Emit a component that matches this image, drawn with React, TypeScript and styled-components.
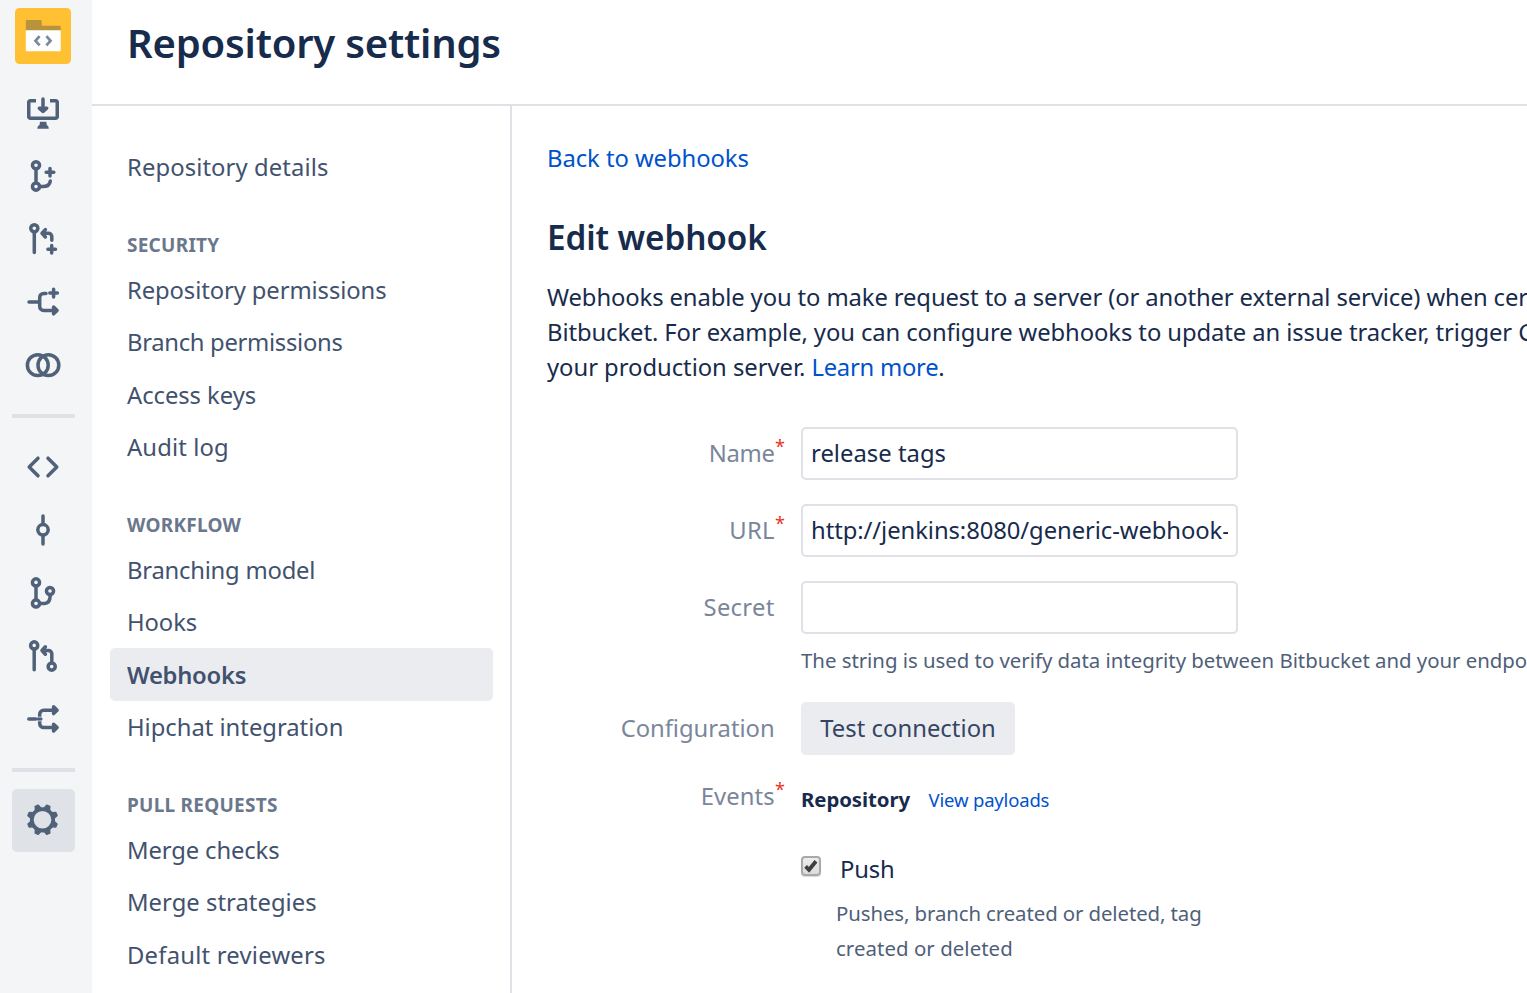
import React from "react";
import styled, { createGlobalStyle } from "styled-components";

const GlobalStyle = createGlobalStyle`
  *, *::before, *::after { box-sizing: border-box; }
  body { margin: 0; overflow: hidden; background: #fff; }
  body, input, button { font-family: "Noto Sans", "Open Sans", sans-serif; }
`;

const ink = "#172b4d";
const line = "#dfe1e6";
const iconColor = "#50617a";

const Page = styled.div`
  display: flex;
  width: 100vw;
  height: 100vh;
  overflow: hidden;
  color: ${ink};
  font-size: 23.8px;
  line-height: 35px;
`;

const Rail = styled.aside`
  flex: none;
  width: 92px;
  padding: 8px 17px 0 12px;
  background: #f4f5f7;
`;

const Logo = styled.a`
  display: block;
  width: 56px;
  height: 56px;
  margin: 0 0 17.5px 3px;
  svg { display: block; }
`;

const RailItem = styled.a<{ $active?: boolean }>`
  display: flex;
  align-items: center;
  justify-content: center;
  height: 63px;
  padding-right: 1px;
  border-radius: 5px;
  background: ${p => (p.$active ? "#dfe2e7" : "transparent")};
`;

const RailDivider = styled.hr`
  height: 4px;
  margin: 17.5px 0 17.3px;
  border: 0;
  background: ${line};
`;

const Glyph = styled.svg`
  display: block;
  width: 42px;
  height: 42px;
  fill: none;
  stroke: ${iconColor};
  stroke-width: 3.5;
  stroke-linecap: round;
  stroke-linejoin: round;
`;

const Main = styled.main`
  display: flex;
  flex: 1;
  flex-direction: column;
  min-width: 0;
`;

const Header = styled.header`
  flex: none;
  height: 106px;
  padding: 14px 35px 0;
  border-bottom: 2px solid ${line};
`;

const Title = styled.h1`
  margin: 0;
  font-size: 40px;
  font-weight: 600;
  line-height: 57px;
  letter-spacing: -0.2px;
`;

const Body = styled.div`
  display: flex;
  flex: 1;
  min-height: 0;
`;

const Nav = styled.nav`
  flex: none;
  width: 420px;
  padding: 35.25px 17px 0 18px;
  border-right: 2px solid ${line};
  overflow: hidden;
`;

const NavHeading = styled.h3`
  height: 70px;
  margin: 0;
  padding: 39.5px 17px 0;
  color: #6b778c;
  font-size: 19px;
  font-weight: 700;
  line-height: 25px;
  letter-spacing: 0.25px;
`;

const NavLink = styled.a<{ $active?: boolean; $track: number }>`
  display: block;
  height: ${p => (p.$active ? 53.25 : 52.5)}px;
  margin-top: ${p => (p.$active ? -0.75 : 0)}px;
  padding: ${p => (p.$active ? 0.75 : 0)}px 17px 0;
  border-radius: 5px;
  background: ${p => (p.$active ? "#ebecf0" : "transparent")};
  color: #42526e;
  font-weight: ${p => (p.$active ? 600 : 400)};
  line-height: 52.5px;
  letter-spacing: ${p => p.$track}px;
`;

const Content = styled.section`
  flex: 1;
  min-width: 0;
  padding: 35px 0 0 35px;
  overflow: hidden;
  white-space: nowrap;
`;

const Link = styled.a<{ $small?: boolean; $track?: number }>`
  color: #0052cc;
  font-size: ${p => (p.$small ? "18.5px" : "inherit")};
  letter-spacing: ${p => p.$track ?? 0}px;
`;

const Subtitle = styled.h2`
  margin: 37px 0 18px;
  font-size: 33.3px;
  font-weight: 600;
  line-height: 49px;
  letter-spacing: -0.1px;
`;

const Intro = styled.p`
  margin: 0 0 42px;
`;

const Text = styled.span<{ $track: number }>`
  letter-spacing: ${p => p.$track}px;
`;

const Field = styled.div<{ $gap: number }>`
  display: grid;
  grid-template-columns: 254px 1fr;
  margin-bottom: ${p => p.$gap}px;
`;

const Label = styled.label<{ $track: number }>`
  display: flex;
  justify-content: flex-end;
  height: 52.5px;
  color: #7a869a;
  line-height: 52.5px;
  letter-spacing: ${p => p.$track}px;
`;

const Marker = styled.span`
  width: 26.4px;
  padding-left: 0.4px;
  color: #e5341f;
  font-size: 18px;
  line-height: 38px;
`;

const TextInput = styled.input<{ $track?: number }>`
  display: block;
  width: 437px;
  height: 52.5px;
  padding: 0 8px;
  border: 2px solid ${line};
  border-radius: 5px;
  outline: 0;
  background: #fff;
  color: ${ink};
  font-size: 23.8px;
  letter-spacing: ${p => p.$track ?? 0}px;
`;

const Help = styled.div`
  margin-top: 9.5px;
  color: #505f79;
  font-size: 20.4px;
  letter-spacing: -0.025px;
`;

const Button = styled.button`
  width: 214px;
  height: 52.75px;
  padding: 0;
  border: 0;
  border-radius: 5px;
  background: #ebecf0;
  color: #344563;
  font-size: 23.8px;
  letter-spacing: 0.04px;
`;

const GroupHeader = styled.div`
  display: flex;
  gap: 18.5px;
  margin: 12px 0 35px;
`;

const GroupName = styled.strong`
  font-size: 20.4px;
  letter-spacing: -0.08px;
`;

const Option = styled.label`
  display: flex;
  align-items: flex-start;
  gap: 19px;
  height: 35px;
`;

const Box = styled.span`
  display: block;
  width: 20px;
  height: 20px;
  margin-top: 4px;
  border: 2px solid #a9a9a9;
  border-radius: 4px;
  background: linear-gradient(#ededed, #dcdcdc);
  box-shadow: 0 1px 1px rgba(0, 0, 0, 0.15);
  svg { display: block; overflow: visible; }
`;

const OptionHelp = styled.div`
  margin-top: 8.8px;
  padding-left: 35px;
  color: #505f79;
  font-size: 20.4px;
`;

const Plus = ({ x, y }: { x: number; y: number }) => (
  <path d={`M${x - 3.8} ${y}h7.6M${x} ${y - 3.8}v7.6`} />
);

const Ring = ({ x, y }: { x: number; y: number }) => <circle cx={x} cy={y} r="3.55" />;

const CloneIcon = () => (
  <Glyph viewBox="0 0 42 42">
    <path strokeLinecap="butt" d="M14 8.75H8.3A1.5 1.5 0 0 0 6.75 10.3V24.5A1.7 1.7 0 0 0 8.5 26.3H33.5A1.7 1.7 0 0 0 35.25 24.5V10.3A1.5 1.5 0 0 0 33.7 8.75H28" />
    <path d="M21 7V19M17.3 16.2 21 19.4 24.7 16.2z" />
    <path fill={iconColor} stroke="none" d="M18 29.7h6.3l.5 3.3q2 .6 2 3.8H15.3q0-3.2 2.2-3.8z" />
  </Glyph>
);

const CreateBranchIcon = () => (
  <Glyph viewBox="0 0 42 42">
    <Ring x={14} y={10.3} /><Ring x={14} y={31.6} />
    <path d="M14 14v14M18 31.6h2.5c4.5 0 7.4-1.8 7.8-5.6" />
    <Plus x={28} y={17.3} />
  </Glyph>
);

const CreatePullRequestIcon = () => (
  <Glyph viewBox="0 0 42 42">
    <Ring x={12.3} y={10.3} />
    <path d="M12.3 14v20.6M20.3 15.3h6.2a3.3 3.3 0 0 1 3.3 3.3v3.6M23.4 11.6l-3.4 3.7 3.4 3.7" />
    <Plus x={29.7} y={31.3} />
  </Glyph>
);

const CreateForkIcon = () => (
  <Glyph viewBox="0 0 42 42">
    <path d="M7 21h10.5M24 12.4h-2.3a4 4 0 0 0-4 4v9a4 4 0 0 0 4 4h12.8M31.6 26l3.5 3.4-3.5 3.4z" />
    <Plus x={31.6} y={12.1} />
  </Glyph>
);

const CompareIcon = () => (
  <Glyph viewBox="0 0 42 42">
    <circle cx="15.8" cy="21.2" r="10.4" /><circle cx="26.4" cy="21.2" r="10.4" />
  </Glyph>
);

const SourceIcon = () => (
  <Glyph viewBox="0 0 42 42">
    <path d="M16 12.2 7.2 21l8.8 8.8M26 12.2l8.8 8.8-8.8 8.8" />
  </Glyph>
);

const CommitIcon = () => (
  <Glyph viewBox="0 0 42 42">
    <circle cx="21" cy="20.8" r="5.2" />
    <path d="M21 7v8M21 26.6v8.3" />
  </Glyph>
);

const BranchesIcon = () => (
  <Glyph viewBox="0 0 42 42">
    <Ring x={14} y={10.4} /><Ring x={14} y={31.4} /><Ring x={28} y={19} />
    <path d="M14 14v14M18 31.4h4.5c4 0 5.6-2.5 5.7-8" />
  </Glyph>
);

const PullRequestsIcon = () => (
  <Glyph viewBox="0 0 42 42">
    <Ring x={12.2} y={10.4} /><Ring x={29.7} y={31.6} />
    <path d="M12.2 14v20.8M20.3 15.5h6.2a3.3 3.3 0 0 1 3.3 3.3v9M23.4 11.8l-3.4 3.7 3.4 3.7" />
  </Glyph>
);

const ForksIcon = () => (
  <Glyph viewBox="0 0 42 42">
    <path d="M34.5 12.2H21.7a4 4 0 0 0-4 4v9.4a4 4 0 0 0 4 4h12.8M31.6 8.8l3.5 3.4-3.5 3.4zM31.6 26.2l3.5 3.4-3.5 3.4z" />
    <path d="M6.8 21h12" />
    <path stroke="#f4f5f7" strokeWidth="0.7" strokeLinecap="butt" d="M14 19.1h5.8M14 22.9h5.8" />
  </Glyph>
);

const SettingsIcon = () => (
  <Glyph viewBox="0 0 42 42">
    <circle cx="20.5" cy="19.8" r="10.7" strokeWidth="3.8" />
    {[22.5, 67.5, 112.5, 157.5, 202.5, 247.5, 292.5, 337.5].map(a => (
      <path key={a} transform={`rotate(${a} 20.5 19.8)`} fill={iconColor} strokeWidth="1.6" d="M18.9 4.8h3.2l1.3 3.8h-5.8z" />
    ))}
  </Glyph>
);

const LogoMark = () => (
  <svg width="56" height="56" viewBox="0 0 56 56">
    <rect width="56" height="56" rx="4.5" fill="#ffc034" />
    <path fill="#b8933a" d="M10.8 13.2q0-1.2 1.2-1.2h13.4q1.3 0 1.3 1.3v4.4h17.8q1.2 0 1.2 1.2v4H10.8z" />
    <path fill="#fff" d="M10.8 22.3h34.9v20.2q0 .8-.8.8H11.6q-.8 0-.8-.8z" />
    <path fill="none" stroke="#7a869a" strokeWidth="2.7" d="M24.6 28.2 20.5 32.8l4.1 4.6M31.4 28.2l4.1 4.6-4.1 4.6" />
  </svg>
);

type Entry = [label: string, track: number];

const groups: { heading: string; items: Entry[] }[] = [
  { heading: "SECURITY", items: [["Repository permissions", -0.1], ["Branch permissions", -0.3], ["Access keys", -0.05], ["Audit log", 0.12]] },
  { heading: "WORKFLOW", items: [["Branching model", -0.22], ["Hooks", -0.1], ["Webhooks", -0.27], ["Hipchat integration", -0.02]] },
  { heading: "PULL REQUESTS", items: [["Merge checks", -0.12], ["Merge strategies", 0.03], ["Default reviewers", 0.23]] },
];

const FieldLabel = ({ text, track, required }: { text: string; track: number; required?: boolean }) => (
  <Label $track={track}>{text}<Marker>{required ? "*" : ""}</Marker></Label>
);

export default function App() {
  return (
    <Page>
      <GlobalStyle />
      <Rail>
        <Logo><LogoMark /></Logo>
        {[CloneIcon, CreateBranchIcon, CreatePullRequestIcon, CreateForkIcon, CompareIcon].map((Icon, i) => (
          <RailItem key={i}><Icon /></RailItem>
        ))}
        <RailDivider />
        {[SourceIcon, CommitIcon, BranchesIcon, PullRequestsIcon, ForksIcon].map((Icon, i) => (
          <RailItem key={i}><Icon /></RailItem>
        ))}
        <RailDivider />
        <RailItem $active><SettingsIcon /></RailItem>
      </Rail>
      <Main>
        <Header><Title>Repository settings</Title></Header>
        <Body>
          <Nav>
            <NavLink $track={0.1}>Repository details</NavLink>
            {groups.map(group => (
              <React.Fragment key={group.heading}>
                <NavHeading>{group.heading}</NavHeading>
                {group.items.map(([label, track]) => (
                  <NavLink key={label} $track={track} $active={label === "Webhooks"}>{label}</NavLink>
                ))}
              </React.Fragment>
            ))}
          </Nav>
          <Content>
            <Link $track={-0.05}>Back to webhooks</Link>
            <Subtitle>Edit webhook</Subtitle>
            <Intro>
              <Text $track={-0.11}>Webhooks enable you to make request to a server (or another external service) when certain</Text><br />
              <Text $track={-0.085}>Bitbucket. For example, you can configure webhooks to update an issue tracker, trigger CI</Text><br />
              <Text $track={-0.03}>your production server. </Text><Link $track={-0.25}>Learn more</Link>.
            </Intro>
            <Field $gap={24.5}>
              <FieldLabel text="Name" track={-0.3} required />
              <TextInput $track={0.03} defaultValue="release tags" />
            </Field>
            <Field $gap={24.5}>
              <FieldLabel text="URL" track={0.2} required />
              <TextInput $track={-0.07} defaultValue="http://jenkins:8080/generic-webhook-trigger/invoke" />
            </Field>
            <Field $gap={23.75}>
              <FieldLabel text="Secret" track={0.3} />
              <div>
                <TextInput />
                <Help>The string is used to verify data integrity between Bitbucket and your endpoint.</Help>
              </div>
            </Field>
            <Field $gap={15.5}>
              <FieldLabel text="Configuration" track={-0.03} />
              <Button>Test connection</Button>
            </Field>
            <Field $gap={0}>
              <FieldLabel text="Events" track={0.08} required />
              <div>
                <GroupHeader>
                  <GroupName>Repository</GroupName>
                  <Link $small $track={-0.18}>View payloads</Link>
                </GroupHeader>
                <Option>
                  <Box>
                    <svg width="16" height="16" viewBox="0 0 16 16">
                      <path d="M2.6 8.4 6 11.8 13 3.2" fill="none" stroke="#404040" strokeWidth="3.8" />
                    </svg>
                  </Box>
                  <Text $track={-0.15}>Push</Text>
                </Option>
                <OptionHelp>
                  <Text $track={-0.1}>Pushes, branch created or deleted, tag</Text><br />
                  <Text $track={0.06}>created or deleted</Text>
                </OptionHelp>
              </div>
            </Field>
          </Content>
        </Body>
      </Main>
    </Page>
  );
}
